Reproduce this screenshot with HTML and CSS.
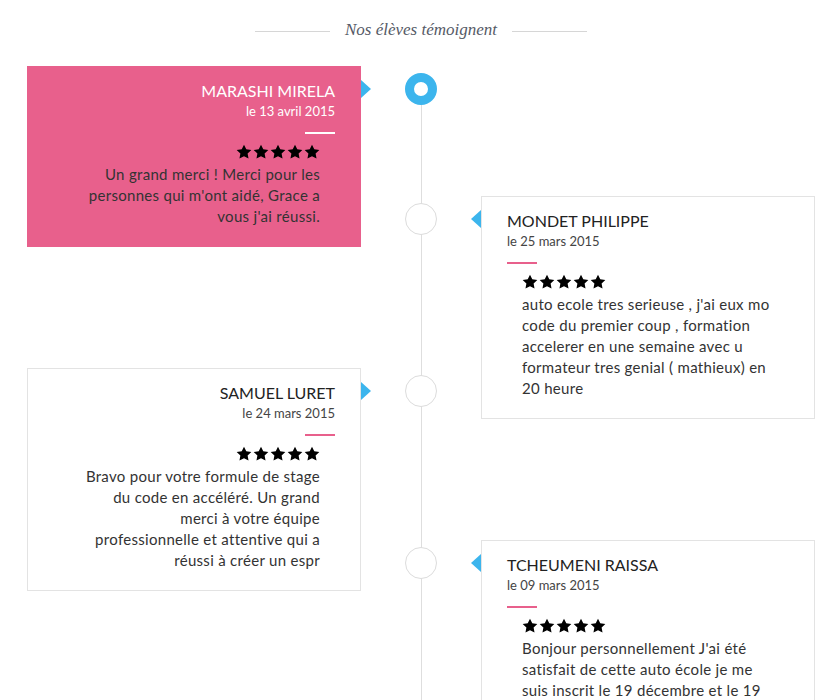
FILE: index.html
```html
<!DOCTYPE html>
<html lang="fr">
<head>
    <meta charset="UTF-8">
    <meta name="viewport" content="width=device-width, initial-scale=1.0">
    <title>Nos élèves témoignent</title>
    <link rel="stylesheet" href="styles.css">
</head>
<body>
    <svg width="0" height="0" class="defs">
        <symbol id="star" viewBox="0 0 24 24">
            <path d="M12 1l3.4 7 7.6 1-5.6 5.3 1.4 7.6L12 18.2l-6.8 3.7 1.4-7.6L1 9l7.6-1z"/>
        </symbol>
    </svg>
    <div class="page">
        <h2 class="title">Nos élèves témoignent</h2>

        <div class="timeline">
            <div class="item left">
                <div class="card pink">
                    <h3 class="name">MARASHI MIRELA</h3>
                    <p class="date">le 13 avril 2015</p>
                    <hr class="bar">
                    <div class="review">
                        <div class="stars">
                            <svg><use href="#star"/></svg><svg><use href="#star"/></svg><svg><use href="#star"/></svg><svg><use href="#star"/></svg><svg><use href="#star"/></svg>
                        </div>
                        <p class="text">Un grand merci ! Merci pour les<br>personnes qui m'ont aidé, Grace a<br>vous j'ai réussi.</p>
                    </div>
                </div>
                <span class="dot active"></span>
            </div>

            <div class="item right">
                <span class="dot"></span>
                <div class="card">
                    <h3 class="name">MONDET PHILIPPE</h3>
                    <p class="date">le 25 mars 2015</p>
                    <hr class="bar">
                    <div class="review">
                        <div class="stars">
                            <svg><use href="#star"/></svg><svg><use href="#star"/></svg><svg><use href="#star"/></svg><svg><use href="#star"/></svg><svg><use href="#star"/></svg>
                        </div>
                        <p class="text">auto ecole tres serieuse , j'ai eux mo<br>code du premier coup , formation<br>accelerer en une semaine avec u<br>formateur tres genial ( mathieux) en<br>20 heure</p>
                    </div>
                </div>
            </div>

            <div class="item left">
                <div class="card">
                    <h3 class="name">SAMUEL LURET</h3>
                    <p class="date">le 24 mars 2015</p>
                    <hr class="bar">
                    <div class="review">
                        <div class="stars">
                            <svg><use href="#star"/></svg><svg><use href="#star"/></svg><svg><use href="#star"/></svg><svg><use href="#star"/></svg><svg><use href="#star"/></svg>
                        </div>
                        <p class="text">Bravo pour votre formule de stage<br>du code en accéléré. Un grand<br>merci à votre équipe<br>professionnelle et attentive qui a<br>réussi à créer un espr</p>
                    </div>
                </div>
                <span class="dot"></span>
            </div>

            <div class="item right">
                <span class="dot"></span>
                <div class="card">
                    <h3 class="name">TCHEUMENI RAISSA</h3>
                    <p class="date">le 09 mars 2015</p>
                    <hr class="bar">
                    <div class="review">
                        <div class="stars">
                            <svg><use href="#star"/></svg><svg><use href="#star"/></svg><svg><use href="#star"/></svg><svg><use href="#star"/></svg><svg><use href="#star"/></svg>
                        </div>
                        <p class="text">Bonjour personnellement J'ai été<br>satisfait de cette auto école je me<br>suis inscrit le 19 décembre et le 19</p>
                    </div>
                </div>
            </div>
        </div>
    </div>
</body>
</html>
```

FILE: styles.css
```css
body {
    margin: 0;
    background-color: #fff;
    font-family: Lato, "Open Sans", Arial, sans-serif;
    color: #222;
}
.defs {
    position: absolute;
}
.page {
    width: 788px;
    padding-left: 27px;
}

/* title */
.title {
    display: flex;
    justify-content: center;
    align-items: center;
    gap: 15px;
    margin: 0 0 26px;
    padding-top: 20px;
    font-family: "Liberation Serif", "DejaVu Serif", serif;
    font-style: italic;
    font-weight: normal;
    font-size: 17px;
    line-height: 20px;
    color: #555a66;
}
.title::before,
.title::after {
    content: "";
    width: 75px;
    height: 1px;
    margin-top: 2px;
    background-color: #d6d6d6;
}

/* timeline */
.timeline {
    position: relative;
}
.timeline::before {
    content: "";
    position: absolute;
    left: 394px;
    top: 20px;
    bottom: 0;
    width: 1px;
    background-color: #dedede;
}
.item {
    display: grid;
    grid-template-columns: 334px 120px 334px;
    align-items: start;
}
.item + .item {
    margin-top: -51px;
}
.left .card {
    grid-column: 1;
    grid-row: 1;
    text-align: right;
}
.right .card {
    grid-column: 3;
    grid-row: 1;
}
.dot {
    grid-column: 2;
    grid-row: 1;
    justify-self: center;
    position: relative;
    box-sizing: border-box;
    width: 32px;
    height: 32px;
    margin-top: 7px;
    border: 1px solid #dcdcdc;
    border-radius: 50%;
    background-color: #fff;
}
.dot.active {
    border: 9px solid #3cb5ed;
}

/* card */
.card {
    position: relative;
    box-sizing: border-box;
    padding: 13px 25px 19px;
    border: 1px solid #e3e3e3;
    background-color: #fff;
}
.card::after {
    content: "";
    position: absolute;
    top: 13px;
    border-top: 9px solid transparent;
    border-bottom: 9px solid transparent;
}
.left .card::after {
    right: -11px;
    border-left: 10px solid #3cb5ed;
}
.right .card::after {
    left: -11px;
    border-right: 10px solid #3cb5ed;
}
.card.pink {
    border-color: #e8608c;
    background-color: #e8608c;
}
.name {
    margin: 0;
    font-size: 16px;
    font-weight: 400;
    line-height: 22px;
    color: #222;
}
.date {
    margin: 0;
    font-size: 13px;
    font-weight: 400;
    line-height: 18px;
    color: #444;
}
.bar {
    width: 30px;
    height: 2px;
    margin: 12px 0 8px;
    border: 0;
    background-color: #e8608c;
}
.left .bar {
    margin-left: auto;
}
.pink .name,
.pink .date {
    color: #fff;
}
.pink .bar {
    background-color: #fff;
}
.review {
    padding: 0 15px;
}
.stars {
    display: flex;
    gap: 1px;
    height: 20px;
    align-items: center;
}
.left .stars {
    justify-content: flex-end;
}
.stars svg {
    width: 16px;
    height: 16px;
    fill: #000;
}
.text {
    margin: 2px 0 0;
    font-size: 15px;
    font-weight: 400;
    letter-spacing: 0.3px;
    line-height: 21px;
    color: #333;
}
```
